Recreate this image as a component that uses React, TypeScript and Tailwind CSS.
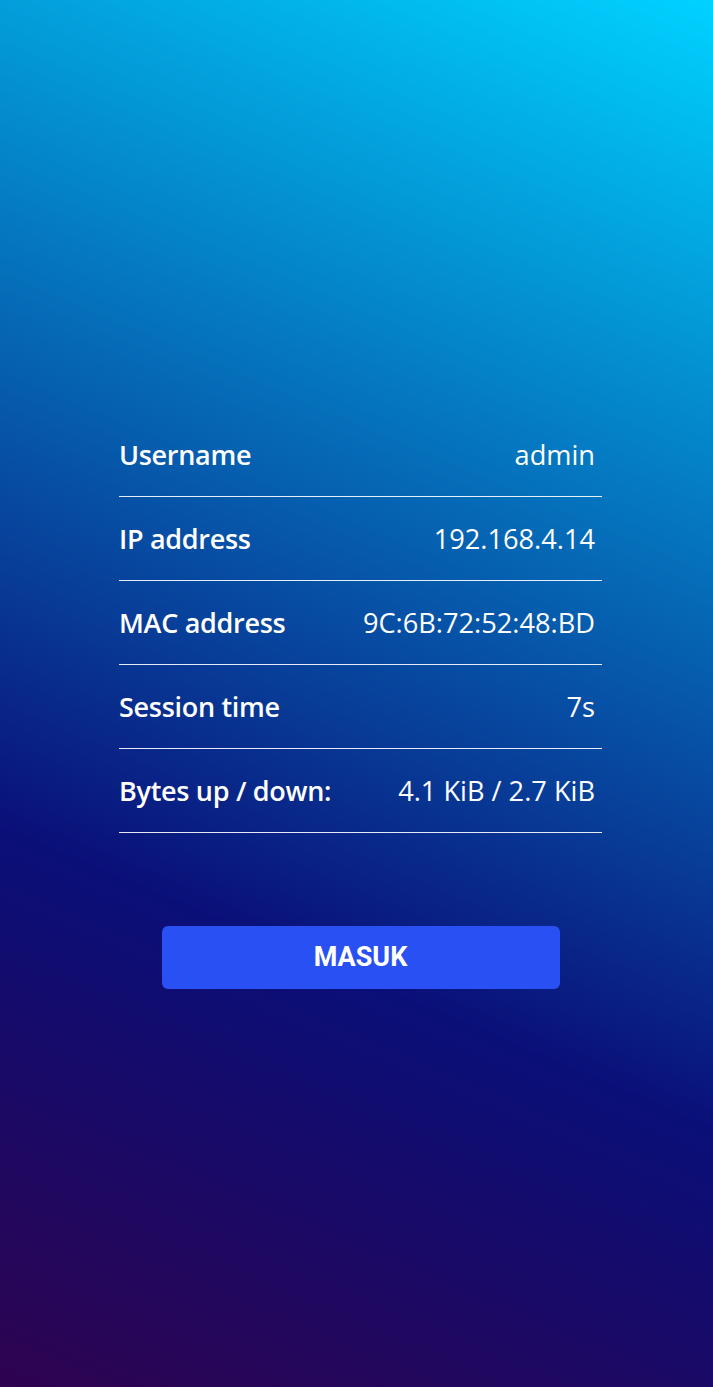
import React from 'react';

const rows = [
  { label: 'Username', value: 'admin' },
  { label: 'IP address', value: '192.168.4.14' },
  { label: 'MAC address', value: '9C:6B:72:52:48:BD' },
  { label: 'Session time', value: '7s' },
  { label: 'Bytes up / down:', value: '4.1 KiB / 2.7 KiB' },
];

export default function App() {
  return (
    <div className="min-h-[1387px] w-full bg-[linear-gradient(203deg,#00d2ff_0%,#0a0f78_67%,#2e0350_100%)] font-['Open_Sans',sans-serif] text-white">
      <div className="flex flex-col items-center pt-[413px] pl-[8px]">
        <div className="w-[483px]">
          {rows.map((row) => (
            <div
              key={row.label}
              className="flex h-[84px] items-center justify-between border-b border-white/90 pt-[2px]"
            >
              <span className="text-[27px] font-semibold tracking-[-0.3px]">{row.label}</span>
              <span className="pr-[7px] text-[27.2px]">{row.value}</span>
            </div>
          ))}
        </div>
        <button
          type="button"
          className="mt-[93px] h-[63px] w-[398px] rounded-md bg-[#2850f2] font-['Roboto',sans-serif] text-[27px] font-bold text-white"
        >
          MASUK
        </button>
      </div>
    </div>
  );
}
